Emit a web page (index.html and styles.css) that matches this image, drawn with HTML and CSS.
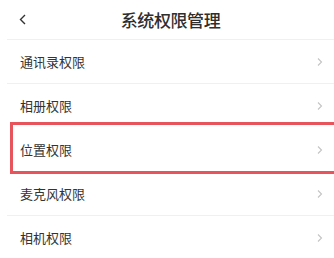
FILE: index.html
```html
<!DOCTYPE html>
<html>
<head>
<meta charset="utf-8">
<link rel="stylesheet" href="styles.css">
</head>
<body>
<div class="page">
  <header class="bar">
    <svg class="back" width="8" height="11" viewBox="0 0 8 11"><polyline points="6,1 1.5,5.5 6,10" fill="none" stroke="#333" stroke-width="1.4"/></svg>
    <h1 class="title">系统权限管理</h1>
  </header>
  <ul class="list">
    <li class="row"><span class="label">通讯录权限</span><svg class="arrow" width="6" height="8" viewBox="0 0 6 8"><polyline points="1,0.5 4.5,4 1,7.5" fill="none" stroke="#c4c4c4" stroke-width="1.1"/></svg></li>
    <li class="row no-line"><span class="label">相册权限</span><svg class="arrow" width="6" height="8" viewBox="0 0 6 8"><polyline points="1,0.5 4.5,4 1,7.5" fill="none" stroke="#c4c4c4" stroke-width="1.1"/></svg></li>
    <li class="row no-line"><span class="label">位置权限</span><svg class="arrow" width="6" height="8" viewBox="0 0 6 8"><polyline points="1,0.5 4.5,4 1,7.5" fill="none" stroke="#c4c4c4" stroke-width="1.1"/></svg></li>
    <li class="row"><span class="label">麦克风权限</span><svg class="arrow" width="6" height="8" viewBox="0 0 6 8"><polyline points="1,0.5 4.5,4 1,7.5" fill="none" stroke="#c4c4c4" stroke-width="1.1"/></svg></li>
    <li class="row"><span class="label">相机权限</span><svg class="arrow" width="6" height="8" viewBox="0 0 6 8"><polyline points="1,0.5 4.5,4 1,7.5" fill="none" stroke="#c4c4c4" stroke-width="1.1"/></svg></li>
  </ul>
  <div class="highlight"></div>
</div>
</body>
</html>
```
FILE: styles.css
```css
html, body {
  margin: 0;
  padding: 0;
  background: #fff;
}
.page {
  position: relative;
  width: 334px;
  height: 258px;
  overflow: hidden;
  font-family: "Noto Sans CJK SC", "Noto Sans", sans-serif;
  color: #333;
}
.bar {
  position: relative;
  height: 39px;
  display: flex;
  align-items: center;
  justify-content: center;
  margin-left: 7px;
  border-bottom: 1px solid #f0f0f0;
}
.back {
  position: absolute;
  left: 12px;
  top: 14px;
}
.title {
  margin: 0;
  font-size: 17px;
  font-weight: 500;
  color: #2e2e2e;
  letter-spacing: -0.4px;
}
.list {
  list-style: none;
  margin: 0 0 0 7px;
  padding: 0;
}
.row {
  height: 43px;
  display: flex;
  align-items: center;
  justify-content: space-between;
  padding: 0 11px 0 13px;
  border-bottom: 1px solid #f0f0f0;
}
.row.no-line {
  border-bottom-color: transparent;
}
.label {
  font-size: 13px;
  color: #333;
}
.arrow {
  display: block;
}
.highlight {
  position: absolute;
  left: 10px;
  top: 122px;
  width: 340px;
  height: 46px;
  border: 3px solid #e8545c;
}
```
